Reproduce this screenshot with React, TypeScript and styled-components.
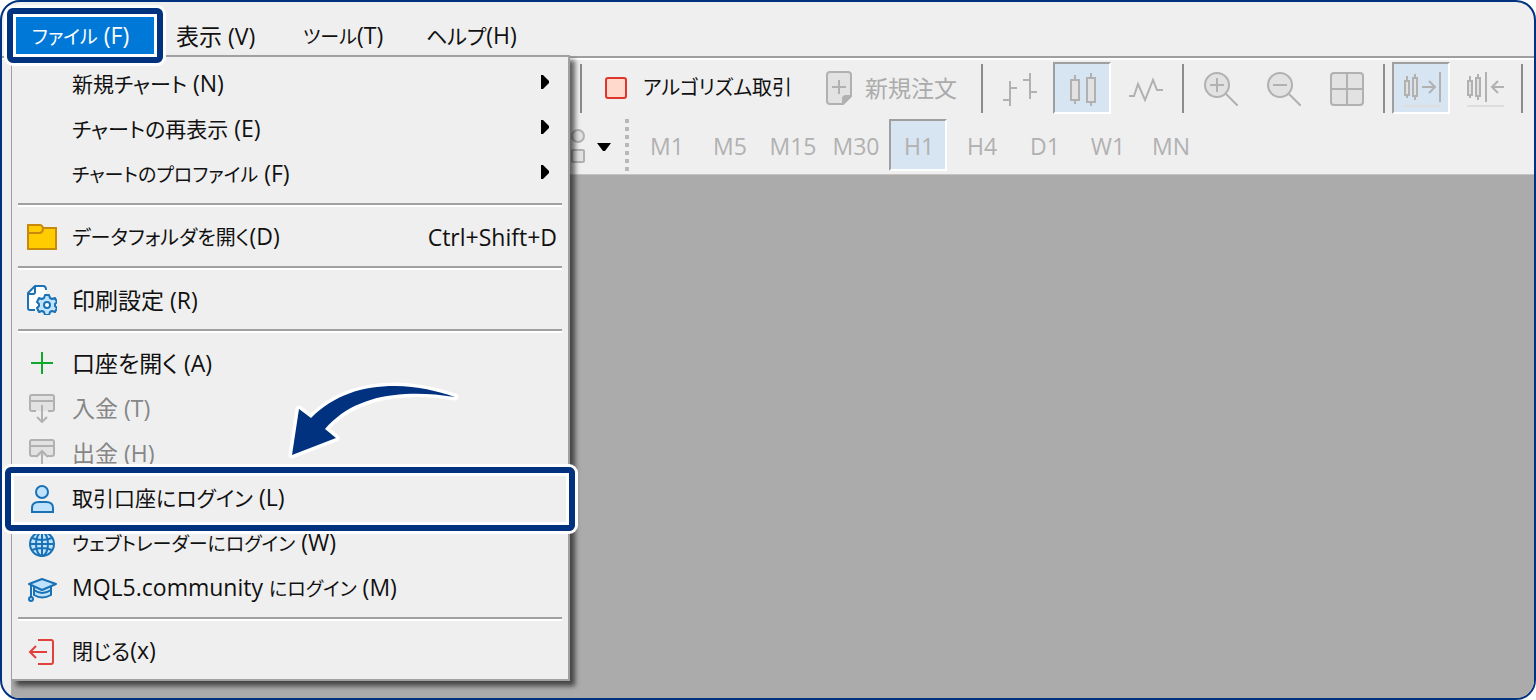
import React from "react";
import styled, { createGlobalStyle, css } from "styled-components";

const NAVY = "#00327f";
const PANEL = "#efefef";
const MUTED = "#b1b1b1";

const GlobalStyle = createGlobalStyle`
  *, *::before, *::after { box-sizing: border-box; }
  body {
    margin: 0;
    background: #fff;
    color: #111;
    font-family: "Open Sans", "Noto Sans CJK JP", sans-serif;
  }
  button {
    margin: 0;
    padding: 0;
    border: 0;
    background: none;
    color: inherit;
    font: inherit;
    text-align: left;
    cursor: default;
  }
  svg { display: block; }
`;

const ring = css`
  &::after {
    content: "";
    position: absolute;
    border: 6px solid ${NAVY};
    border-radius: 6px;
    box-shadow: 0 0 0 3px #fff, inset 0 0 0 3px #fff;
    pointer-events: none;
  }
`;

const Window = styled.div`
  position: relative;
  display: flex;
  flex-direction: column;
  min-height: 100vh;
  border: 2px solid ${NAVY};
  border-radius: 20px;
  background: ${PANEL};
  overflow: hidden;
`;

type Size = "small" | "regular" | "medium" | "large";
const labelSizes: Record<Size, number> = { small: 19, regular: 20, medium: 21, large: 23 };

const Label = styled.span<{ $size: Size; $tight?: boolean }>`
  display: inline-flex;
  align-items: baseline;
  gap: ${(p) => (p.$tight ? 0 : 6)}px;
  white-space: nowrap;
  font-size: ${(p) => labelSizes[p.$size]}px;
  line-height: 30px;
  font-feature-settings: "palt", "kern";
`;

const Latin = styled.span`
  font-size: 23px;
`;

const MenuBar = styled.nav`
  display: flex;
  padding: 15px 14px 2px;
  border-bottom: 2px solid #9f9f9f;
`;

const MenuBarItem = styled.button<{ $width: number; $open?: boolean }>`
  position: relative;
  width: ${(p) => p.$width}px;
  height: 37px;
  padding-left: ${(p) => (p.$open ? 16 : 22)}px;
  ${(p) =>
    p.$open &&
    css`
      z-index: 3;
      background: #0078d7;
      color: #fff;
      ${ring}
      &::after { inset: -9px; }
    `}
`;

const Toolbars = styled.div`
  display: flex;
  flex-direction: column;
  gap: 5px;
  padding: 2px 0 3px 567px;
  border-top: 2px solid #fff;
`;

const Toolbar = styled.div<{ $indent?: boolean }>`
  display: flex;
  align-items: center;
  gap: 5px;
  height: 52px;
  padding-left: ${(p) => (p.$indent ? 8 : 0)}px;
`;

const Divider = styled.span`
  flex: none;
  width: 7px;
  height: 49px;
  background: linear-gradient(#8c8c8c, #8c8c8c) center / 2px 100% no-repeat;
`;

const ToolButton = styled.button<{ $pressed?: boolean }>`
  flex: none;
  display: flex;
  align-items: center;
  justify-content: center;
  width: 58px;
  height: 52px;
  padding: 2px 0 0 2px;
  color: ${MUTED};
  font-size: 23px;
  ${(p) =>
    p.$pressed &&
    css`
      background: #d7e4f1;
      border: 2px solid;
      border-color: #9f9f9f #fff #fff #9f9f9f;
    `}
`;

const WideButton = styled.button<{ $width: number; $space: number; $muted?: boolean }>`
  flex: none;
  display: flex;
  align-items: center;
  gap: ${(p) => p.$space}px;
  width: ${(p) => p.$width}px;
  height: 52px;
  padding-left: ${(p) => p.$space}px;
  color: ${(p) => (p.$muted ? "#ababab" : "#111")};
`;

const ShapesButton = styled.button`
  flex: none;
  display: flex;
  align-items: center;
  gap: 10px;
  width: 49px;
  height: 52px;
  padding: 4px 0 0 1px;
`;

const Grip = styled.span`
  flex: none;
  width: 4px;
  height: 52px;
  margin: 0 3px 0 2px;
  background: repeating-linear-gradient(#b8b8b8 0 4px, transparent 4px 8px);
`;

const Workspace = styled.main`
  flex: 1;
  margin-left: 9px;
  border-top: 1px solid #c4c4c4;
  background: #ababab;
`;

const Menu = styled.div`
  position: absolute;
  z-index: 2;
  top: 53px;
  left: 9px;
  width: 559px;
  padding: 4px 0 6px;
  border: 2px solid #a0a0a0;
  border-left-width: 1px;
  background: ${PANEL};
  box-shadow: 5px 5px 5px rgba(0, 0, 0, 0.6);
`;

const MenuItem = styled.button<{ $marked?: boolean }>`
  position: relative;
  display: flex;
  align-items: center;
  gap: 15px;
  width: 100%;
  height: 45px;
  padding: 0 11px 0 15px;
  color: #111;
  &:disabled { color: #868686; }
  ${(p) =>
    p.$marked &&
    css`
      z-index: 1;
      ${ring}
      &::after { inset: -8px -7px -11px -7px; }
    `}
`;

const IconSlot = styled.span`
  flex: none;
  width: 30px;
`;

const Trailing = styled.span`
  margin-left: auto;
  font-size: 23px;
  line-height: 30px;
`;

const Submenu = styled(Trailing)`
  padding: 0 7px 3px 0;
`;

const Rule = styled.hr`
  height: 4px;
  margin: 7px 6px;
  border: 0;
  border-top: 2px solid #a0a0a0;
  border-bottom: 2px solid #fff;
`;

const Pointer = styled.svg`
  position: absolute;
  z-index: 3;
  top: 376px;
  left: 280px;
  pointer-events: none;
`;

const grey = { fill: "#e2e2e2", stroke: MUTED, strokeWidth: 2 };
const blue = { fill: "#bfe3ff", stroke: "#1a72b5", strokeWidth: 2 };

const icons: Record<string, React.ReactNode> = {
  folder: (
    <g fill="#fc0" stroke="#c88a0c" strokeWidth="2">
      <path d="M1 3h12q2 0 3 3h13v21H1z" />
      <path d="M1 11h11q4 0 4-5" fill="none" />
    </g>
  ),
  print: (
    <g stroke="#1a72b5" strokeWidth="2" strokeLinejoin="round">
      <path d="M1 8 7 1h9q3 0 3 4v20H3q-2 0-2-2z" fill="#fff" stroke="none" />
      <path d="M8 25H3q-2 0-2-2V8l7-7h8q3 0 3 4M1 9h5q2 0 2-2V1" fill="none" />
      <path
        d="m17 13 1-3h4l1 3 2 1 3-1 2 4-2 2v2l2 2-2 4-3-1-2 1-1 3h-4l-1-3-2-1-3 1-2-4 2-2v-2l-2-2 2-4 3 1z"
        fill="#bfe3ff"
      />
      <circle cx="20" cy="20" r="3" fill="#fff" />
    </g>
  ),
  plus: <path d="M15 4v22M4 15h22" fill="none" stroke="#0fa82c" strokeWidth="2" />,
  deposit: (
    <g {...grey}>
      <path d="M9 18H5q-2 0-2-2V4q0-2 2-2h20q2 0 2 2v12q0 2-2 2h-4" />
      <path d="M3 8h24M15 12v17M10 24l5 5 5-5" fill="none" />
    </g>
  ),
  withdraw: (
    <g {...grey}>
      <path d="M9 18H5q-2 0-2-2V4q0-2 2-2h20q2 0 2 2v12q0 2-2 2h-4" />
      <path d="M3 8h24M15 29V14M9 19l6-6 6 6" fill="none" />
    </g>
  ),
  user: (
    <g {...blue}>
      <circle cx="15" cy="9" r="6" />
      <path d="M5 29v-4q0-6 7-6h7q7 0 7 6v4z" />
    </g>
  ),
  globe: (
    <g {...blue}>
      <circle cx="15" cy="16" r="12" />
      <path d="M3 16h24M15 4v24M5 10q10 4 20 0M5 22q10-4 20 0" fill="none" />
      <ellipse cx="15" cy="16" rx="6" ry="12" fill="none" />
    </g>
  ),
  cap: (
    <g {...blue} strokeLinejoin="round">
      <path d="M7 12v10q8 5 17 0V12z" />
      <path d="M15 6 29 11l-14 6L2 11z" />
      <path d="M7 17q8 6 17 0M4 12v13" fill="none" />
      <circle cx="4" cy="26" r="2" />
    </g>
  ),
  exit: (
    <path
      d="M11 4h13q2 0 2 2v20q0 2-2 2H11M20 16H4M9 10l-6 6 6 6"
      fill="none"
      stroke="#e2403a"
      strokeWidth="2"
    />
  ),
};

function Icon({ name }: { name?: string }) {
  return (
    <IconSlot>
      {name && (
        <svg width="30" height="30" viewBox="0 0 30 30" aria-hidden="true">
          {icons[name]}
        </svg>
      )}
    </IconSlot>
  );
}

type Caption = { lead?: string; text: string; keyName: string; size: Size; tight?: boolean };

type Entry = Caption & {
  icon?: string;
  submenu?: boolean;
  shortcut?: string;
  disabled?: boolean;
  marked?: boolean;
};

const groups: Entry[][] = [
  [
    { text: "新規チャート", keyName: "(N)", size: "medium", submenu: true },
    { text: "チャートの再表示", keyName: "(E)", size: "medium", submenu: true },
    { text: "チャートのプロファイル", keyName: "(F)", size: "small", submenu: true },
  ],
  [
    {
      icon: "folder",
      text: "データフォルダを開く",
      keyName: "(D)",
      size: "regular",
      tight: true,
      shortcut: "Ctrl+Shift+D",
    },
  ],
  [{ icon: "print", text: "印刷設定", keyName: "(R)", size: "large" }],
  [
    { icon: "plus", text: "口座を開く", keyName: "(A)", size: "large" },
    { icon: "deposit", text: "入金", keyName: "(T)", size: "large", disabled: true },
    { icon: "withdraw", text: "出金", keyName: "(H)", size: "large", disabled: true },
    { icon: "user", text: "取引口座にログイン", keyName: "(L)", size: "medium", marked: true },
    { icon: "globe", text: "ウェブトレーダーにログイン", keyName: "(W)", size: "small" },
    { icon: "cap", lead: "MQL5.community", text: "にログイン", keyName: "(M)", size: "small" },
  ],
  [{ icon: "exit", text: "閉じる", keyName: "(x)", size: "medium", tight: true }],
];

const barItems: (Caption & { width: number; open?: boolean })[] = [
  { text: "ファイル", keyName: "(F)", size: "small", width: 138, open: true },
  { text: "表示", keyName: "(V)", size: "large", width: 127 },
  { text: "ツール", keyName: "(T)", size: "small", tight: true, width: 123 },
  { text: "ヘルプ", keyName: "(H)", size: "medium", tight: true, width: 134 },
];

function CaptionLabel({ caption }: { caption: Caption }) {
  return (
    <Label $size={caption.size} $tight={caption.tight}>
      {caption.lead && <Latin>{caption.lead}</Latin>}
      {caption.text}
      <Latin>{caption.keyName}</Latin>
    </Label>
  );
}

const smallCandles = (
  <>
    <path d="M4 6v22M12 4v26" />
    <path d="M2 11h4v14H2zM10 8h4v18h-4z" />
  </>
);

type Tool = { label: string; art: React.ReactNode; box?: number; pressed?: boolean };

const toolGroups: Tool[][] = [
  [
    {
      label: "バーチャート",
      art: <path d="M7 9v25M0 28h7M7 16h7M27 1v26M20 8h7M27 20h7" fill="none" />,
    },
    {
      label: "ローソク足",
      pressed: true,
      art: (
        <>
          <path d="M9 3v29M25 1v33" />
          <path d="M5 8h8v20H5zM21 6h8v24h-8z" />
        </>
      ),
    },
    {
      label: "ラインチャート",
      art: <path d="M0 24h5l4-12 7 16 8-20 4 10h6" fill="none" />,
    },
  ],
  [
    {
      label: "ズームイン",
      art: (
        <>
          <circle cx="13" cy="13" r="12" />
          <path d="M6 13h14M13 6v14M22 22l12 12" fill="none" />
        </>
      ),
    },
    {
      label: "ズームアウト",
      art: (
        <>
          <circle cx="13" cy="13" r="12" />
          <path d="M6 13h14M22 22l12 12" fill="none" />
        </>
      ),
    },
    {
      label: "タイル表示",
      art: (
        <>
          <rect x="1" y="1" width="32" height="32" rx="3" />
          <path d="M17 1v32M1 17h32" />
        </>
      ),
    },
  ],
  [
    {
      label: "自動スクロール",
      box: 38,
      pressed: true,
      art: (
        <>
          {smallCandles}
          <path d="M19 17h13M26 11l6 6-6 6M37 2v30" fill="none" />
          <path d="M1 36h37" stroke="#dedede" />
        </>
      ),
    },
    {
      label: "チャートシフト",
      box: 38,
      art: (
        <>
          {smallCandles}
          <path d="M38 17H26M32 11l-6 6 6 6M20 2v30" fill="none" />
          <path d="M1 36h37" stroke="#dedede" />
        </>
      ),
    },
  ],
];

const timeframes = ["M1", "M5", "M15", "M30", "H1", "H4", "D1", "W1", "MN"];

export default function App() {
  return (
    <>
      <GlobalStyle />
      <Window>
        <MenuBar aria-label="メニュー">
          {barItems.map((item) => (
            <MenuBarItem key={item.text} $width={item.width} $open={item.open}>
              <CaptionLabel caption={item} />
            </MenuBarItem>
          ))}
        </MenuBar>

        <Menu role="menu" aria-label="ファイル">
          {groups.map((group, index) => (
            <React.Fragment key={index}>
              {index > 0 && <Rule />}
              {group.map((entry) => (
                <MenuItem
                  key={entry.text}
                  role="menuitem"
                  disabled={entry.disabled}
                  $marked={entry.marked}
                >
                  <Icon name={entry.icon} />
                  <CaptionLabel caption={entry} />
                  {entry.shortcut && <Trailing>{entry.shortcut}</Trailing>}
                  {entry.submenu && (
                    <Submenu>
                      <svg width="10" height="16" viewBox="0 0 10 16" aria-hidden="true">
                        <path d="M1 1v14h2l6-6V7L3 1z" fill="#000" />
                      </svg>
                    </Submenu>
                  )}
                </MenuItem>
              ))}
            </React.Fragment>
          ))}
        </Menu>

        <Toolbars>
          <Toolbar $indent>
            <Divider />
            <WideButton $width={219} $space={16}>
              <svg width="22" height="22" viewBox="0 0 22 22" aria-hidden="true">
                <rect
                  x="1"
                  y="1"
                  width="20"
                  height="20"
                  rx="2"
                  fill="#ffd9cc"
                  stroke="#e0352f"
                  strokeWidth="2"
                />
              </svg>
              <Label $size="regular">アルゴリズム取引</Label>
            </WideButton>
            <WideButton $width={160} $space={13} $muted>
              <svg width="26" height="34" viewBox="0 0 26 34" aria-hidden="true">
                <g {...grey}>
                  <path d="M4 1h18q3 0 3 3v21l-8 8H4q-3 0-3-3V4q0-3 3-3z" />
                  <path d="M13 9v14M6 16h14" />
                  <path d="M17 33v-5q0-3 3-3h5z" fill={MUTED} />
                </g>
              </svg>
              <Label $size="large">新規注文</Label>
            </WideButton>
            {toolGroups.map((tools, index) => (
              <React.Fragment key={index}>
                <Divider />
                {tools.map(({ label, art, box = 34, pressed }) => (
                  <ToolButton key={label} aria-label={label} $pressed={pressed}>
                    <svg width={box} height={box} viewBox={`0 0 ${box} ${box}`} {...grey}>
                      {art}
                    </svg>
                  </ToolButton>
                ))}
              </React.Fragment>
            ))}
            <Divider />
          </Toolbar>
          <Toolbar>
            <ShapesButton aria-label="図形">
              <svg width="17" height="36" viewBox="0 0 17 36" {...grey} aria-hidden="true">
                <circle cx="8" cy="7" r="6" />
                <rect x="2" y="21" width="12" height="12" rx="1" />
              </svg>
              <svg width="14" height="8" viewBox="0 0 14 8" aria-hidden="true">
                <path d="M0 0h14L8 8H6z" fill="#000" />
              </svg>
            </ShapesButton>
            <Grip />
            {timeframes.map((name) => (
              <ToolButton key={name} $pressed={name === "H1"}>
                {name}
              </ToolButton>
            ))}
          </Toolbar>
        </Toolbars>
        <Workspace />

        <Pointer width="184" height="84" viewBox="282 378 184 84" aria-hidden="true">
          <path
            d="M292 455 299 409l12 9C334 395 362 386 395 386 418 386 437 391 455 397 437 394 420 393 405 394 372 396 345 406 325 429l11 9z"
            fill={NAVY}
            stroke="#fff"
            strokeWidth="7"
            strokeLinejoin="round"
            paintOrder="stroke"
          />
        </Pointer>
      </Window>
    </>
  );
}
